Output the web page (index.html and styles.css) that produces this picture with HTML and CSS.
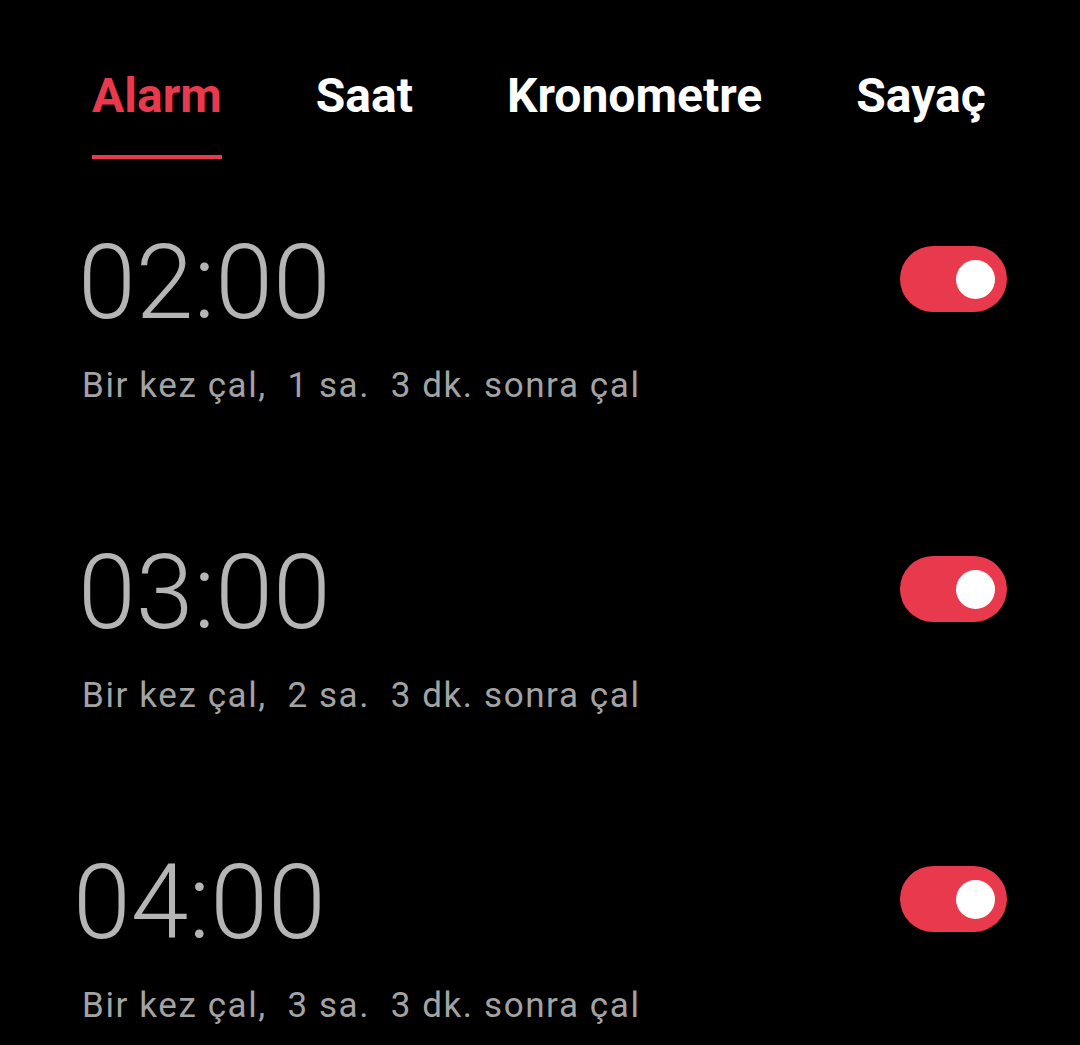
FILE: index.html
```html
<!DOCTYPE html>
<html lang="tr">
<head>
<meta charset="utf-8">
<title>Alarm</title>
<link rel="stylesheet" href="styles.css">
</head>
<body>
<nav class="tabs">
  <div class="tab active"><span class="tab-label">Alarm</span><span class="tab-bar"></span></div>
  <div class="tab"><span class="tab-label">Saat</span></div>
  <div class="tab"><span class="tab-label">Kronometre</span></div>
  <div class="tab"><span class="tab-label">Sayaç</span></div>
</nav>
<main class="list">
  <section class="alarm">
    <div class="info">
      <div class="time">02:00</div>
      <div class="desc">Bir kez çal,  1 sa.  3 dk. sonra çal</div>
    </div>
    <div class="toggle on"><span class="knob"></span></div>
  </section>
  <section class="alarm">
    <div class="info">
      <div class="time">03:00</div>
      <div class="desc">Bir kez çal,  2 sa.  3 dk. sonra çal</div>
    </div>
    <div class="toggle on"><span class="knob"></span></div>
  </section>
  <section class="alarm">
    <div class="info">
      <div class="time shift">04:00</div>
      <div class="desc">Bir kez çal,  3 sa.  3 dk. sonra çal</div>
    </div>
    <div class="toggle on"><span class="knob"></span></div>
  </section>
</main>
</body>
</html>
```
FILE: styles.css
```css
html, body {
  margin: 0;
  padding: 0;
  background: #000;
}
body {
  width: 1080px;
  height: 1045px;
  overflow: hidden;
  font-family: Roboto, "Noto Sans", sans-serif;
}
.tabs {
  display: flex;
  gap: 94px;
  padding: 68px 0 0 92px;
}
.tab {
  display: flex;
  flex-direction: column;
}
.tab-label {
  font-size: 48px;
  line-height: 56px;
  font-weight: 700;
  color: #fff;
}
.tab.active .tab-label {
  color: #e83a4c;
}
.tab-bar {
  display: block;
  height: 4px;
  margin-top: 31px;
  background: #e83a4c;
}
.list {
  display: flex;
  flex-direction: column;
  gap: 125px;
  padding-top: 64px;
}
.alarm {
  display: flex;
  justify-content: space-between;
  align-items: flex-start;
  padding: 0 73px 0 78px;
}
.time {
  font-size: 104px;
  line-height: 120px;
  font-weight: 300;
  color: #b5b5b5;
}
.time.shift {
  margin-left: -5px;
}
.desc {
  margin-top: 21px;
  margin-left: 4px;
  font-size: 35px;
  line-height: 44px;
  letter-spacing: 1.6px;
  color: #a3a3a3;
  white-space: pre;
}
.toggle {
  position: relative;
  margin-top: 23px;
  width: 107px;
  height: 66px;
  border-radius: 33px;
  background: #e83a4c;
}
.knob {
  position: absolute;
  top: 14px;
  right: 12px;
  width: 39px;
  height: 39px;
  border-radius: 50%;
  background: #fff;
}
```
